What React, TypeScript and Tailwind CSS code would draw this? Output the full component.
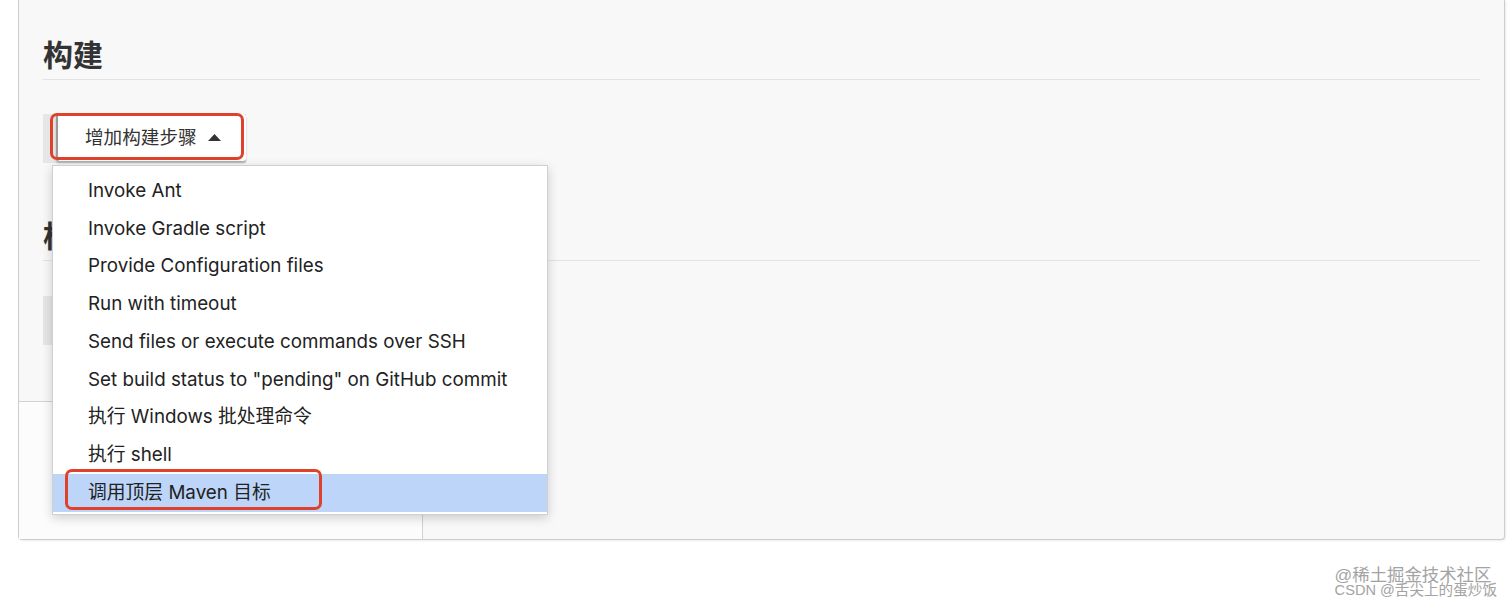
import React from 'react';

const FONT = "font-['Inter','Noto_Sans_CJK_SC',sans-serif]";

const steps = [
  'Invoke Ant',
  'Invoke Gradle script',
  'Provide Configuration files',
  'Run with timeout',
  'Send files or execute commands over SSH',
  'Set build status to "pending" on GitHub commit',
  '执行 Windows 批处理命令',
  '执行 shell',
  '调用顶层 Maven 目标',
];

const CaretUp = () => (
  <svg width="13" height="7" viewBox="0 0 13 7" className="ml-[11px] text-[#333]">
    <path d="M0 7 L6.5 0 L13 7 Z" fill="currentColor" />
  </svg>
);

const StepMenu: React.FC = () => (
  <div className="absolute left-[9px] top-[51px] z-10 w-[496px] h-[350px] bg-white border border-[#d0d0d0] shadow-[0_3px_10px_rgba(0,0,0,0.18)] pt-[6px] pb-[5px]">
    {steps.map((s, i) => {
      const active = i === steps.length - 1;
      return (
        <div
          key={s}
          className={`relative h-[37.75px] flex items-center pl-[35px] text-[18.8px] text-[#222] ${active ? 'bg-[#bcd5f8]' : ''}`}
        >
          {s}
          {active && (
            <div className="absolute left-[12px] top-[-5px] w-[257px] h-[41px] border-[3px] border-[#e0412b] rounded-[7px]" />
          )}
        </div>
      );
    })}
  </div>
);

const AddButton: React.FC<{ label: string; open?: boolean }> = ({ label, open }) => (
  <div className="relative inline-flex bg-[#e6e6e6] pl-[13px] h-[49px]">
    <button className="h-[47px] flex items-center bg-white border-l-2 border-[#9a9a9a] rounded-[3px] shadow-[0_2px_2px_rgba(0,0,0,0.25)] pl-[27px] pr-[25px] text-[18.6px] text-[#333]">
      {label}
      <CaretUp />
    </button>
    {open && (
      <>
        <div className="absolute left-[7px] top-[-1px] w-[194px] h-[47px] border-[3px] border-[#e0412b] rounded-[7px]" />
        <StepMenu />
      </>
    )}
  </div>
);

export default function App() {
  return (
    <div className={`w-[1512px] h-[603px] bg-white overflow-hidden ${FONT}`}>
      <div className="ml-[18px] w-[1487px] h-[540px] bg-[#f8f8f8] border-x border-b border-[#cdcdcd] rounded-b-[4px] shadow-[1px_1px_2px_rgba(0,0,0,0.08)] flex flex-col">
        <div className="pl-[24px] pr-[24px]">
          <h2 className="mt-[37px] h-[43px] pb-[7px] border-b border-[#e3e3e3] text-[30px] leading-[36px] font-bold text-[#333]">
            构建
          </h2>
          <div className="mt-[34px]">
            <AddButton label="增加构建步骤" open />
          </div>
          <h2 className="mt-[55px] h-[43px] pb-[7px] border-b border-[#e3e3e3] text-[30px] leading-[36px] font-bold text-[#333]">
            构建后操作
          </h2>
          <div className="mt-[35px]">
            <AddButton label="增加构建后操作步骤" />
          </div>
        </div>
        <div className="mt-auto w-[404px] h-[138px] bg-[#fcfcfc] border-t border-r border-[#d2d2d2]" />
      </div>
      <div className="flex justify-end pr-[15px] mt-[27px]">
        <div className="text-[#a3a3a3] font-['Liberation_Sans','Noto_Sans_CJK_SC',sans-serif]">
          <div className="text-[17.4px] leading-[16px]">@稀土掘金技术社区</div>
          <div className="text-[14.6px] leading-[15px]">CSDN @舌尖上的蛋炒饭</div>
        </div>
      </div>
    </div>
  );
}
